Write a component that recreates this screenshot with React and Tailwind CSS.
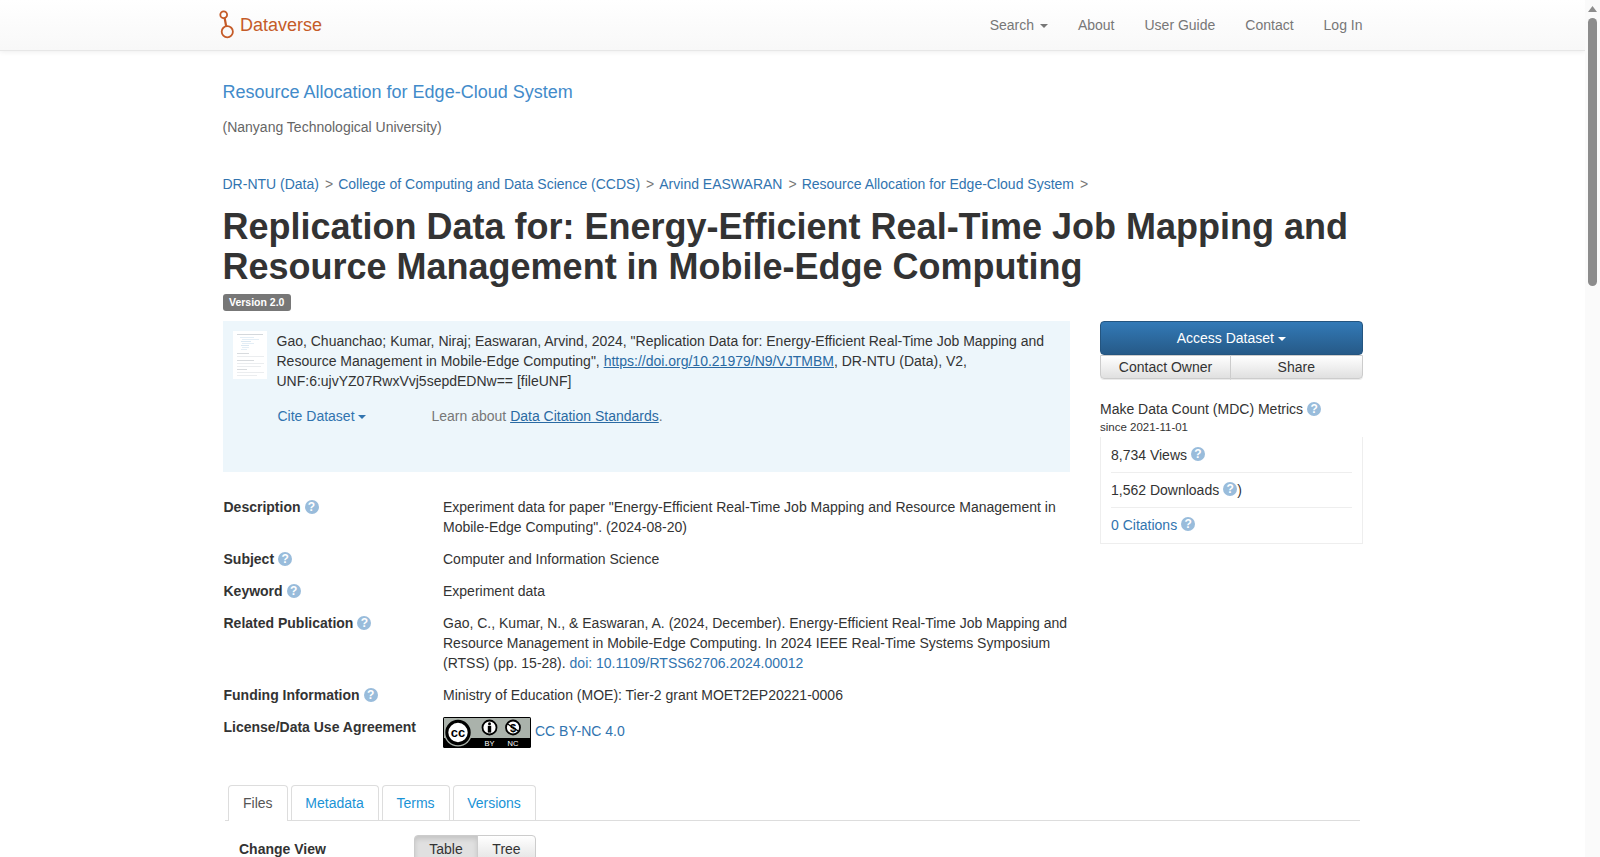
import React from 'react';
import { Fragment } from 'react';

const LINK = 'text-[#3174af]';

const Help = () => (
  <span className="inline-flex ml-[4px] w-[14px] h-[14px] rounded-full bg-[#99bcdb] text-white text-[12px] font-bold items-center justify-center leading-none -translate-y-px">?</span>
);

const Caret = ({ className = '' }) => (
  <span className={`inline-block align-middle border-t-4 border-x-4 border-x-transparent border-t-current w-0 h-0 ${className}`}></span>
);

const Thumb = () => (
  <svg width="34" height="48" viewBox="0 0 34 48" className="shrink-0">
    <rect width="34" height="48" fill="#fff" />
    <rect x="4" y="3" width="26" height="1" fill="#d4d8dc" />
    <rect x="7" y="6" width="14" height="1" fill="#e4eef6" />
    <rect x="9" y="8" width="17" height="1" fill="#e4eef6" />
    <rect x="8" y="10" width="10" height="1" fill="#dbe8f2" />
    <rect x="9" y="12" width="12" height="1" fill="#e4eef6" />
    <rect x="8" y="14" width="8" height="1" fill="#dbe8f2" />
    <rect x="9" y="16" width="7" height="1" fill="#e4eef6" />
    <rect x="8" y="18" width="6" height="1" fill="#e4eef6" />
    <rect x="4" y="22" width="12" height="1" fill="#d8dbde" />
    <rect x="4" y="25" width="27" height="1" fill="#ebedef" />
    <rect x="4" y="29" width="17" height="1" fill="#d8dbde" />
    <rect x="4" y="32" width="27" height="1" fill="#ebedef" />
    <rect x="4" y="35" width="24" height="1" fill="#ebedef" />
    <rect x="4" y="38" width="10" height="1" fill="#d8dbde" />
    <rect x="4" y="41" width="27" height="1" fill="#ebedef" />
    <rect x="4" y="44" width="20" height="1" fill="#ebedef" />
  </svg>
);

const CcBadge = () => (
  <svg width="88" height="31" viewBox="0 0 88 31" className="shrink-0">
    <rect width="88" height="31" rx="1.5" fill="#000" />
    <rect x="1" y="1" width="86" height="20" fill="#aab2ab" />
    <circle cx="15" cy="15.5" r="14" fill="#aab2ab" />
    <circle cx="15" cy="15.5" r="11.2" fill="#fff" stroke="#000" strokeWidth="3" />
    <text x="15" y="19.5" textAnchor="middle" fontSize="13" fontWeight="700" fontFamily="Liberation Sans" fill="#000">cc</text>
    <circle cx="46.5" cy="10.5" r="7" fill="#fff" stroke="#000" strokeWidth="1.8" />
    <circle cx="46.5" cy="6.8" r="1.5" fill="#000" />
    <rect x="44.8" y="8.8" width="3.4" height="6.8" fill="#000" />
    <circle cx="70" cy="10.5" r="7" fill="#fff" stroke="#000" strokeWidth="1.8" />
    <text x="70" y="14.5" textAnchor="middle" fontSize="11" fontWeight="700" fontFamily="Liberation Sans" fill="#000">$</text>
    <line x1="64" y1="6.5" x2="76" y2="14.5" stroke="#000" strokeWidth="1.3" />
    <text x="46.5" y="29" textAnchor="middle" fontSize="7.5" fontFamily="Liberation Sans" fill="#fff">BY</text>
    <text x="70" y="29" textAnchor="middle" fontSize="7.5" fontFamily="Liberation Sans" fill="#fff">NC</text>
  </svg>
);

const Logo = () => (
  <svg width="18" height="30" viewBox="0 0 18 30" className="shrink-0">
    <g fill="none" stroke="#c55b28" strokeWidth="1.8">
      <circle cx="5.7" cy="4.7" r="3.4" />
      <circle cx="9.3" cy="21.7" r="5.6" />
      <line x1="6.6" y1="8" x2="8.2" y2="16.2" strokeWidth="2.2" />
    </g>
  </svg>
);

const Row = ({ label, children, help = true }) => (
  <div className="flex mb-3">
    <div className="w-[220.5px] pl-px font-bold shrink-0">
      {label}
      {help && <Help />}
    </div>
    <div className="w-[627px]">{children}</div>
  </div>
);

const App = () => {
  const crumbs = ['DR-NTU (Data)', 'College of Computing and Data Science (CCDS)', 'Arvind EASWARAN', 'Resource Allocation for Edge-Cloud System'];
  const navs = ['About', 'User Guide', 'Contact', 'Log In'];

  return (
    <div className="flex h-[857px] overflow-hidden bg-white text-[#333] text-[14px] leading-[20px] font-['Liberation_Sans',Arial,sans-serif]">
      <div className="w-[1585px] shrink-0">
        <nav className="h-[51px] border-b border-[#e7e7e7] bg-gradient-to-b from-white to-[#f8f8f8] shadow-[0_1px_5px_rgba(0,0,0,0.07)]">
          <div className="w-[1170px] mx-auto px-[15px] flex items-center justify-between h-[50px]">
            <a className="flex items-center gap-[4px] text-[18px] text-[#c55b28] -ml-[4.5px]">
              <Logo />
              <span>Dataverse</span>
            </a>
            <ul className="flex text-[#777] -mr-[15px]">
              <li className="px-[15px]">Search <Caret className="ml-[2px]" /></li>
              {navs.map((n) => (
                <li key={n} className="px-[15px]">{n}</li>
              ))}
            </ul>
          </div>
        </nav>

        <main className="w-[1170px] mx-auto px-[15px]">
          <div className="pt-[31px] text-[18px] text-[#428bca]">Resource Allocation for Edge-Cloud System</div>
          <div className="mt-[15px] text-[#666]">(Nanyang Technological University)</div>

          <div className={`mt-[37px] flex ${LINK}`}>
            {crumbs.map((c) => (
              <Fragment key={c}>
                <span>{c}</span>
                <span className="text-[#777] pl-[6px] pr-[5px]">&gt;</span>
              </Fragment>
            ))}
          </div>

          <h1 className="mt-[13px] mb-[8px] text-[36px] leading-[39.6px] font-bold">
            Replication Data for: Energy-Efficient Real-Time Job Mapping and Resource Management in Mobile-Edge Computing
          </h1>
          <span className="block w-fit px-[6.5px] h-[17px] leading-[17px] rounded-[3px] bg-[#777] text-white text-[10.5px] font-bold">Version 2.0</span>

          <div className="flex mt-[10px] gap-[30px]">
            <div className="w-[847.5px] shrink-0">
              <div className="h-[150.5px] bg-[#edf6fb] flex gap-[10px] pt-[10px] pl-[10px] pr-[20px]">
                <Thumb />
                <div>
                  <p>
                    Gao, Chuanchao; Kumar, Niraj; Easwaran, Arvind, 2024, "Replication Data for: Energy-Efficient Real-Time Job Mapping and Resource Management in Mobile-Edge Computing", <a className="text-[#2a6aa3] underline">https://doi.org/10.21979/N9/VJTMBM</a>, DR-NTU (Data), V2, UNF:6:ujvYZ07RwxVvj5sepdEDNw== [fileUNF]
                  </p>
                  <div className="flex mt-[15px] text-[#777]">
                    <span className={`w-[155px] pl-px ${LINK}`}>Cite Dataset <Caret /></span>
                    <span>Learn about <a className="text-[#2a6aa3] underline">Data Citation Standards</a>.</span>
                  </div>
                </div>
              </div>

              <div className="mt-[25px]">
                <Row label="Description">Experiment data for paper "Energy-Efficient Real-Time Job Mapping and Resource Management in Mobile-Edge Computing". (2024-08-20)</Row>
                <Row label="Subject">Computer and Information Science</Row>
                <Row label="Keyword">Experiment data</Row>
                <Row label="Related Publication">
                  Gao, C., Kumar, N., & Easwaran, A. (2024, December). Energy-Efficient Real-Time Job Mapping and Resource Management in Mobile-Edge Computing. In 2024 IEEE Real-Time Systems Symposium (RTSS) (pp. 15-28). <a className={LINK}>doi: 10.1109/RTSS62706.2024.00012</a>
                </Row>
                <Row label="Funding Information">Ministry of Education (MOE): Tier-2 grant MOET2EP20221-0006</Row>
                <Row label="License/Data Use Agreement" help={false}>
                  <div className={`flex items-center gap-[4px] ${LINK}`}>
                    <CcBadge />
                    <span className="pb-[3px]">CC BY-NC 4.0</span>
                  </div>
                </Row>
              </div>
            </div>

            <aside className="w-[262.5px] shrink-0">
              <button className="block w-full h-[34px] rounded-[4px] border border-[#245580] bg-gradient-to-b from-[#337ab7] to-[#265a88] text-white">Access Dataset <Caret /></button>
              <div className="flex h-[24px]">
                <button className="w-[131px] rounded-bl-[4px] border border-[#ccc] bg-gradient-to-b from-white to-[#e0e0e0] shadow-[0_1px_0_rgba(0,0,0,0.08)]">Contact Owner</button>
                <button className="flex-1 -ml-px rounded-br-[4px] border border-[#ccc] bg-gradient-to-b from-white to-[#e0e0e0] shadow-[0_1px_0_rgba(0,0,0,0.08)]">Share</button>
              </div>
              <div className="mt-[20px]">Make Data Count (MDC) Metrics<Help /></div>
              <div className="text-[11.5px] leading-[16px]">since 2021-11-01</div>
              <div className="mt-[1.5px] border-x border-b border-[#eee] px-[10px]">
                <div className="h-[36px] pt-[2px] flex items-center border-b border-[#eee]">8,734 Views<Help /></div>
                <div className="h-[35px] flex items-center border-b border-[#eee]">1,562 Downloads<Help />)</div>
                <div className={`h-[35px] flex items-center ${LINK}`}>0 Citations<Help /></div>
              </div>
            </aside>
          </div>

          <div className="mt-[25px] ml-[2.5px] w-[1135px] flex border-b border-[#ddd] h-[36px] pl-[3px] gap-[3px]">
            <div className="w-[59.5px] h-[36px] flex items-center justify-center border border-b-0 border-[#ddd] rounded-t-[4px] bg-white text-[#555]">Files</div>
            <div className="w-[88px] h-[35px] flex items-center justify-center border border-b-0 border-[#ddd] rounded-t-[4px] text-[#1a93d6]">Metadata</div>
            <div className="w-[68px] h-[35px] flex items-center justify-center border border-b-0 border-[#ddd] rounded-t-[4px] text-[#1a93d6]">Terms</div>
            <div className="w-[83px] h-[35px] flex items-center justify-center border border-b-0 border-[#ddd] rounded-t-[4px] text-[#1a93d6]">Versions</div>
          </div>

          <div className="flex mt-[14px] ml-[16.5px]">
            <div className="w-[175px] font-bold pt-[4px]">Change View</div>
            <div className="flex h-[30px]">
              <button className="w-[64px] pb-[2px] rounded-l-[4px] border border-[#ccc] bg-[#e0e0e0] shadow-[inset_0_3px_5px_rgba(0,0,0,0.125)]">Table</button>
              <button className="w-[59px] pb-[2px] -ml-px rounded-r-[4px] border border-[#ccc] bg-gradient-to-b from-white to-[#e0e0e0]">Tree</button>
            </div>
          </div>
        </main>
      </div>

      <div className="w-[15px] shrink-0 bg-[#fafafa] flex flex-col items-center">
        <svg width="9" height="6" viewBox="0 0 9 6" className="mt-[6px]">
          <path d="M4.5 0 L9 6 H0 Z" fill="#8c8c8c" />
        </svg>
        <div className="mt-[6px] w-[9px] h-[268px] rounded-full bg-[#8c8c8c]"></div>
      </div>
    </div>
  );
};

export default App;
